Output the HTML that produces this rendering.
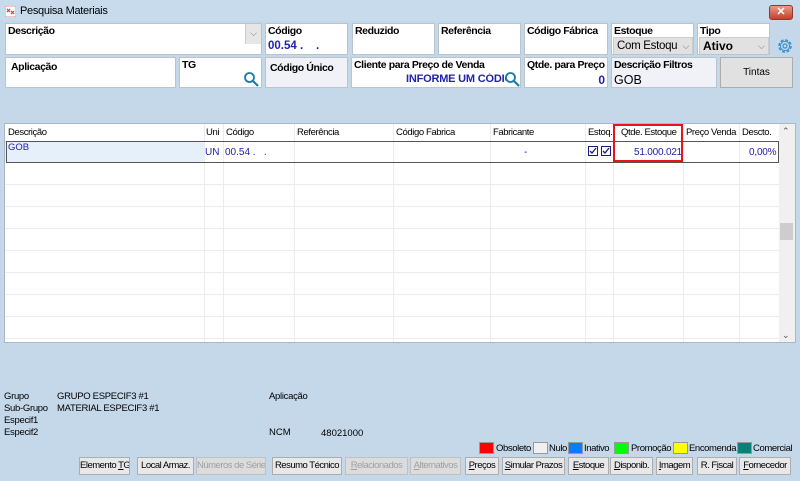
<!DOCTYPE html>
<html><head><meta charset="utf-8">
<style>
*{box-sizing:border-box;margin:0;padding:0}
body{width:800px;height:481px;overflow:hidden;background:#c4d8ea;font-family:"Liberation Sans",sans-serif;position:relative;font-size:11px;color:#000;white-space:nowrap}
.a{position:absolute}
.f{position:absolute;background:#fff;border:1px solid #b9c4cf;overflow:hidden}
.f .l{position:absolute;left:2px;top:1px;font-weight:bold;font-size:10.5px;letter-spacing:-0.4px}
.g{background:#f0f2f8}
.v{position:absolute;font-weight:bold;font-size:12px}
.btn{position:absolute;top:457px;height:18px;border:1px solid #adadad;background:#e8e8e8;font-size:9.5px;text-align:center;line-height:16px;color:#000;letter-spacing:-0.5px;overflow:hidden}
.dis{color:#a0a0a0;background:#dcdcdc;border-color:#c0c0c0}
.hl{position:absolute;left:5px;width:774px;height:1px;background:#ececec}
.vl{position:absolute;top:124px;width:1px;height:218px;background:#ececec}
.h{position:absolute;top:127px;font-size:9.5px;letter-spacing:-0.4px}
.lg{position:absolute;top:442px;width:15px;height:12px;border:1px solid #999}
.lt{position:absolute;top:443px;font-size:9.5px;letter-spacing:-0.4px}
</style></head><body>
<div class="a" style="left:0;top:0;width:800px;height:21px;background:#c8dbec"></div>
<svg class="a" style="left:5px;top:6px" width="11" height="11"><rect width="11" height="11" fill="#fff" stroke="#e87" /><path d="M2 3l3 3M5 3L2 6M6 5l3 3M9 5L6 8" stroke="#e44" stroke-width="1.3"/></svg>
<div class="a" style="left:20px;top:5px;font-size:11px;letter-spacing:-0.3px">Pesquisa Materiais</div>
<div class="a" style="left:769px;top:5px;width:24px;height:15px;background:linear-gradient(#e89a88,#c5402c);border:1px solid #8b3a2e;border-radius:3px;color:#fff;text-align:center;font-size:11px;line-height:13px;font-weight:bold">✕</div>

<div class="f" style="left:5px;top:23px;width:257px;height:32px"><span class="l">Descrição</span>
<div class="a" style="right:0;top:0;width:16px;height:20px;background:#e6e6e6;border-left:1px solid #ccc;color:#777;text-align:center;font-size:9px;line-height:18px">⌵</div></div>
<div class="f" style="left:265px;top:23px;width:83px;height:32px"><span class="l">Código</span><span class="v" style="left:2px;top:16px;color:#2222aa;font-size:11.5px">00.54 .&nbsp;&nbsp;&nbsp;&nbsp;.</span></div>
<div class="f" style="left:352px;top:23px;width:83px;height:32px"><span class="l">Reduzido</span></div>
<div class="f" style="left:438px;top:23px;width:83px;height:32px"><span class="l">Referência</span></div>
<div class="f" style="left:524px;top:23px;width:84px;height:32px"><span class="l">Código Fábrica</span></div>
<div class="f" style="left:611px;top:23px;width:83px;height:32px"><span class="l">Estoque</span>
<div class="a" style="left:1px;top:13px;width:80px;height:18px;background:#e1e1e1;border:1px solid #ccc;font-size:11.5px;padding-left:3px;line-height:16px;overflow:hidden;letter-spacing:-0.3px">Com Estoqu<span style="position:absolute;right:3px;color:#777;font-size:9px;background:#e1e1e1">⌵</span></div></div>
<div class="f" style="left:697px;top:23px;width:73px;height:32px"><span class="l">Tipo</span>
<div class="a" style="left:1px;top:13px;width:70px;height:18px;background:#e1e1e1;border:1px solid #ccc;font-size:12px;font-weight:bold;padding-left:3px;line-height:16px">Ativo<span style="position:absolute;right:3px;color:#777;font-size:9px;font-weight:normal">⌵</span></div></div>
<svg class="a" style="left:776px;top:37px" width="18" height="18" viewBox="0 0 18 18"><circle cx="9" cy="9" r="6" fill="none" stroke="#3a8fd0" stroke-width="1.6" stroke-dasharray="3 1.7"/><circle cx="9" cy="9" r="4.6" fill="none" stroke="#3a8fd0" stroke-width="1"/><circle cx="9" cy="9" r="2" fill="none" stroke="#3a8fd0" stroke-width="1.2"/></svg>

<div class="f" style="left:5px;top:57px;width:171px;height:31px"><span class="l" style="left:5px;top:3px">Aplicação</span></div>
<div class="f" style="left:179px;top:57px;width:83px;height:31px"><span class="l">TG</span>
<svg class="a" style="right:2px;top:13px" width="16" height="16"><circle cx="6.5" cy="6.5" r="4.5" fill="none" stroke="#1a7aa8" stroke-width="1.8"/><path d="M10 10l5 5" stroke="#1a7aa8" stroke-width="2.2"/></svg></div>
<div class="f g" style="left:265px;top:57px;width:83px;height:31px"><span class="l" style="left:4px;top:4px">Código Único</span></div>
<div class="f" style="left:351px;top:57px;width:170px;height:31px"><span class="l">Cliente para Preço de Venda</span><span class="v" style="left:54px;top:15px;color:#2222aa;font-size:11px;letter-spacing:-0.2px;width:100px;overflow:hidden">INFORME UM CÓDIG</span>
<svg class="a" style="right:0px;top:13px" width="16" height="16"><circle cx="6.5" cy="6.5" r="4.5" fill="none" stroke="#1a7aa8" stroke-width="1.8"/><path d="M10 10l5 5" stroke="#1a7aa8" stroke-width="2.2"/></svg></div>
<div class="f" style="left:524px;top:57px;width:84px;height:31px"><span class="l">Qtde. para Preço</span><span class="v" style="right:2px;top:15px;color:#2222aa">0</span></div>
<div class="f g" style="left:611px;top:57px;width:106px;height:31px"><span class="l">Descrição Filtros</span><span class="v" style="left:2px;top:15px;font-weight:normal;font-size:12.5px">GOB</span></div>
<div class="a" style="left:720px;top:57px;width:73px;height:31px;background:#e1e1e1;border:1px solid #adadad;text-align:center;line-height:29px;font-size:10px">Tintas</div>

<div class="a" style="left:4px;top:123px;width:792px;height:220px;background:#fff;border:1px solid #a9b8c6"></div>
<div class="a" style="left:779px;top:124px;width:16px;height:218px;background:#f0f0f0"></div>
<div class="a" style="left:780px;top:223px;width:13px;height:17px;background:#cdcdcd"></div>
<div class="a" style="left:782px;top:126px;font-size:9px;color:#555">⌃</div>
<div class="a" style="left:782px;top:330px;font-size:9px;color:#555">⌄</div>
<div class="a" style="left:5px;top:142px;width:200px;height:20px;background:#e6f0fb"></div>
<div class="hl" style="top:141px;background:#d0d0d0"></div>
<div class="hl" style="top:184px"></div><div class="hl" style="top:206px"></div><div class="hl" style="top:228px"></div><div class="hl" style="top:250px"></div><div class="hl" style="top:272px"></div><div class="hl" style="top:294px"></div><div class="hl" style="top:316px"></div><div class="hl" style="top:338px"></div>
<div class="vl" style="left:204px"></div><div class="vl" style="left:223px"></div><div class="vl" style="left:294px"></div><div class="vl" style="left:393px"></div><div class="vl" style="left:490px"></div><div class="vl" style="left:585px"></div><div class="vl" style="left:613px"></div><div class="vl" style="left:683px"></div><div class="vl" style="left:739px"></div>
<div class="a" style="left:6px;top:141px;width:773px;height:22px;border:1.5px solid #555"></div>
<div class="h" style="left:8px">Descrição</div><div class="h" style="left:206px">Uni</div><div class="h" style="left:226px">Código</div><div class="h" style="left:297px">Referência</div><div class="h" style="left:396px">Código Fabrica</div><div class="h" style="left:493px">Fabricante</div><div class="h" style="left:588px;width:25px;overflow:hidden">Estoq.</div><div class="h" style="left:621px">Qtde. Estoque</div><div class="h" style="left:686px;width:53px;overflow:hidden">Preço Venda</div><div class="h" style="left:742px">Descto.</div>
<div class="a" style="left:8px;top:142px;font-size:9.5px;color:#2222aa">GOB</div>
<div class="a" style="left:205px;top:147px;font-size:10px;color:#2222aa">UN</div>
<div class="a" style="left:225px;top:147px;font-size:10px;color:#2222aa">00.54 .&nbsp;&nbsp;&nbsp;.</div>
<div class="a" style="left:524px;top:147px;font-size:10px;color:#2222aa">-</div>
<svg class="a" style="left:588px;top:146px" width="24" height="11"><rect x="0.5" y="0.5" width="9" height="9" fill="#fff" stroke="#1a1a80"/><path d="M2 5l2 2 4-5" stroke="#1a1a80" fill="none" stroke-width="1.3"/><rect x="13.5" y="0.5" width="9" height="9" fill="#fff" stroke="#1a1a80"/><path d="M15 5l2 2 4-5" stroke="#1a1a80" fill="none" stroke-width="1.3"/></svg>
<div class="a" style="left:634px;top:147px;font-size:10px;color:#2222aa;letter-spacing:-0.2px">51.000.021</div>
<div class="a" style="left:749px;top:147px;font-size:10px;color:#2222aa;letter-spacing:-0.2px">0,00%</div>
<div class="a" style="left:613px;top:124px;width:70px;height:38px;border:2.5px solid #e8141c"></div>

<div class="a" style="left:4px;top:391px;font-size:9.5px;line-height:12px;letter-spacing:-0.3px">Grupo<br>Sub-Grupo<br>Especif1<br>Especif2</div>
<div class="a" style="left:57px;top:391px;font-size:9.5px;line-height:12px;letter-spacing:-0.3px">GRUPO ESPECIF3 #1<br>MATERIAL ESPECIF3 #1</div>
<div class="a" style="left:269px;top:391px;font-size:9.5px;letter-spacing:-0.3px">Aplicação</div>
<div class="a" style="left:269px;top:427px;font-size:9.5px">NCM</div>
<div class="a" style="left:321px;top:428px;font-size:9.5px">48021000</div>

<div class="lg" style="left:479px;background:#f00"></div><div class="lt" style="left:496px">Obsoleto</div>
<div class="lg" style="left:533px;background:#f0f0f0"></div><div class="lt" style="left:549px">Nulo</div>
<div class="lg" style="left:568px;background:#0a7aff"></div><div class="lt" style="left:584px">Inativo</div>
<div class="lg" style="left:614px;background:#0f0"></div><div class="lt" style="left:631px">Promoção</div>
<div class="lg" style="left:673px;background:#ff0"></div><div class="lt" style="left:689px">Encomenda</div>
<div class="lg" style="left:737px;background:#0a8078"></div><div class="lt" style="left:753px">Comercial</div>

<div class="btn" style="left:79px;width:51px">Elemento <u>T</u>G</div>
<div class="btn" style="left:137px;width:57px">Local Armaz.</div>
<div class="btn dis" style="left:196px;width:70px">Números de Série</div>
<div class="btn" style="left:272px;width:70px">Resumo Técnico</div>
<div class="btn dis" style="left:345px;width:63px"><u>R</u>elacionados</div>
<div class="btn dis" style="left:410px;width:51px"><u>A</u>lternativos</div>
<div class="btn" style="left:465px;width:34px"><u>P</u>reços</div>
<div class="btn" style="left:502px;width:63px"><u>S</u>imular Prazos</div>
<div class="btn" style="left:568px;width:41px"><u>E</u>stoque</div>
<div class="btn" style="left:610px;width:43px"><u>D</u>isponib.</div>
<div class="btn" style="left:656px;width:37px"><u>I</u>magem</div>
<div class="btn" style="left:697px;width:40px">R. F<u>i</u>scal</div>
<div class="btn" style="left:739px;width:52px"><u>F</u>ornecedor</div>
</body></html>
